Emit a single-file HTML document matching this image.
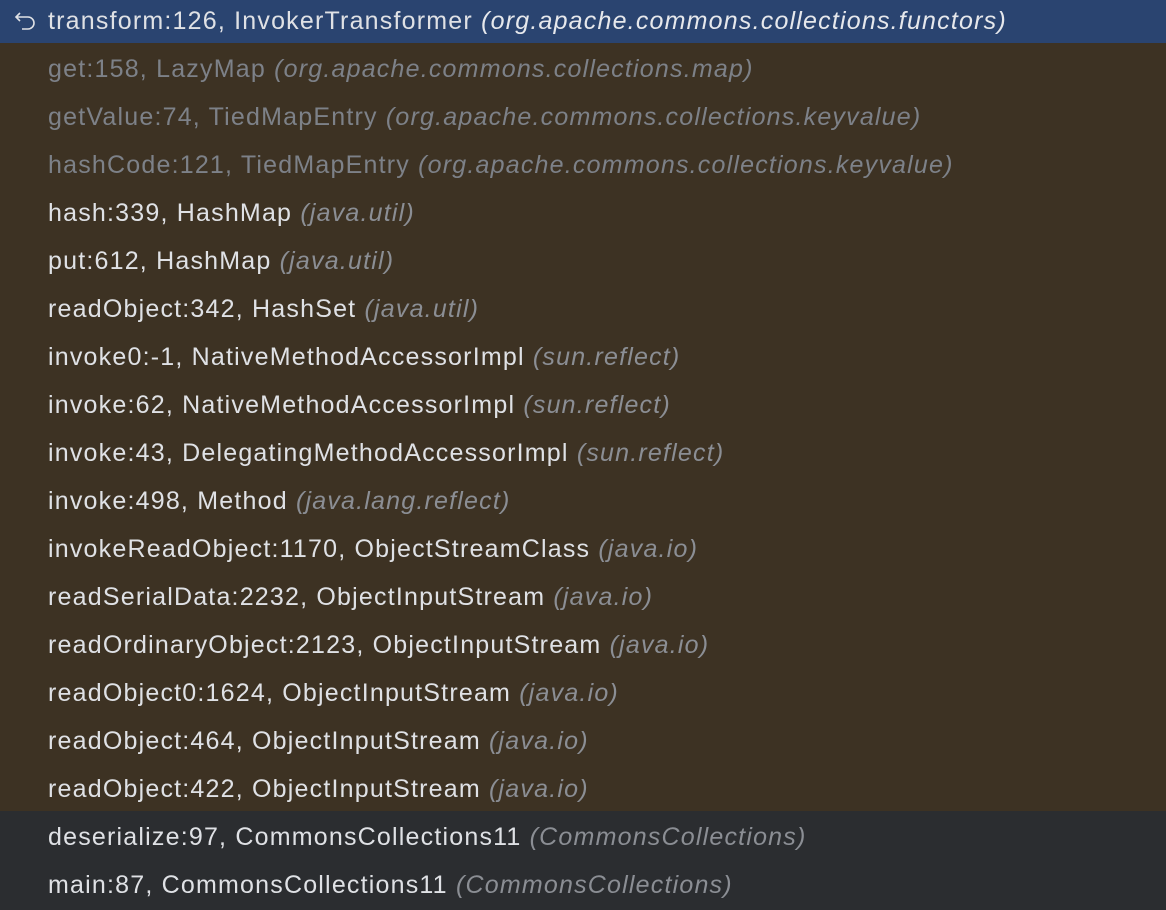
<!DOCTYPE html>
<html><head><style>
body{margin:0;width:1166px;height:910px;overflow:hidden;background:#2b2d30;font-family:"Liberation Sans",sans-serif;}
.r{position:absolute;left:0;width:1166px;height:48px;line-height:48px;font-size:25px;letter-spacing:1.2px;color:#dfe1e5;white-space:nowrap;}
.r span.t{position:absolute;left:48px;}
i{color:#8b8e94;}
.d{color:#7d8188;}
.d i{color:#7d8188;}
</style></head><body>
<div style="position:absolute;left:0;top:0;width:1166px;height:43px;background:#2a4470"></div>
<div style="position:absolute;left:0;top:43px;width:1166px;height:768px;background:#3d3223"></div>
<svg style="position:absolute;left:14px;top:9px" width="24" height="24" viewBox="0 0 24 24"><path d="M6 4 L2 8 L6 12 M2 8 H14 a6 6 0 0 1 0 12 H8" fill="none" stroke="#dfe1e5" stroke-width="1.6"/></svg>
<div class="r" style="top:-3px"><span class="t">transform:126, InvokerTransformer <i style="color:#e6e8ec">(org.apache.commons.collections.functors)</i></span></div>
<div class="r d" style="top:45px"><span class="t">get:158, LazyMap <i>(org.apache.commons.collections.map)</i></span></div>
<div class="r d" style="top:93px"><span class="t">getValue:74, TiedMapEntry <i>(org.apache.commons.collections.keyvalue)</i></span></div>
<div class="r d" style="top:141px"><span class="t">hashCode:121, TiedMapEntry <i>(org.apache.commons.collections.keyvalue)</i></span></div>
<div class="r" style="top:189px"><span class="t">hash:339, HashMap <i>(java.util)</i></span></div>
<div class="r" style="top:237px"><span class="t">put:612, HashMap <i>(java.util)</i></span></div>
<div class="r" style="top:285px"><span class="t">readObject:342, HashSet <i>(java.util)</i></span></div>
<div class="r" style="top:333px"><span class="t">invoke0:-1, NativeMethodAccessorImpl <i>(sun.reflect)</i></span></div>
<div class="r" style="top:381px"><span class="t">invoke:62, NativeMethodAccessorImpl <i>(sun.reflect)</i></span></div>
<div class="r" style="top:429px"><span class="t">invoke:43, DelegatingMethodAccessorImpl <i>(sun.reflect)</i></span></div>
<div class="r" style="top:477px"><span class="t">invoke:498, Method <i>(java.lang.reflect)</i></span></div>
<div class="r" style="top:525px"><span class="t">invokeReadObject:1170, ObjectStreamClass <i>(java.io)</i></span></div>
<div class="r" style="top:573px"><span class="t">readSerialData:2232, ObjectInputStream <i>(java.io)</i></span></div>
<div class="r" style="top:621px"><span class="t">readOrdinaryObject:2123, ObjectInputStream <i>(java.io)</i></span></div>
<div class="r" style="top:669px"><span class="t">readObject0:1624, ObjectInputStream <i>(java.io)</i></span></div>
<div class="r" style="top:717px"><span class="t">readObject:464, ObjectInputStream <i>(java.io)</i></span></div>
<div class="r" style="top:765px"><span class="t">readObject:422, ObjectInputStream <i>(java.io)</i></span></div>
<div class="r" style="top:813px"><span class="t">deserialize:97, CommonsCollections11 <i>(CommonsCollections)</i></span></div>
<div class="r" style="top:861px"><span class="t">main:87, CommonsCollections11 <i>(CommonsCollections)</i></span></div>
</body></html>
